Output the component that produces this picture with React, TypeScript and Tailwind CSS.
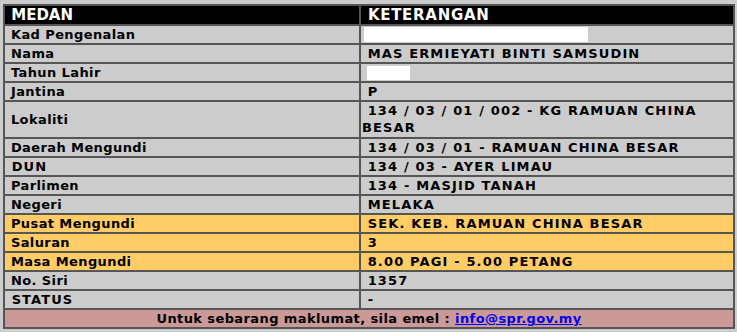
import React from "react";

const font = { fontFamily: '"DejaVu Sans", Verdana, sans-serif' };

type Row = { label: string; value: React.ReactNode; tone?: "gray" | "orange"; tall?: boolean; caps?: boolean };

const rows: Row[] = [
  { label: "Kad Pengenalan", value: <span className="block h-[15px] w-[224px] bg-white mt-[1px] ml-[2px]" /> },
  { label: "Nama", value: "\u00a0MAS ERMIEYATI BINTI SAMSUDIN" },
  { label: "Tahun Lahir", value: <span className="block h-[14px] w-[43px] bg-white mt-[2px] ml-[5px]" /> },
  { label: "Jantina", value: "\u00a0P" },
  { label: "Lokaliti", value: "\u00a0134 / 03 / 01 / 002 - KG RAMUAN CHINA BESAR", tall: true },
  { label: "Daerah Mengundi", value: "\u00a0134 / 03 / 01 - RAMUAN CHINA BESAR" },
  { label: "DUN", value: "\u00a0134 / 03 - AYER LIMAU", caps: true },
  { label: "Parlimen", value: "\u00a0134 - MASJID TANAH" },
  { label: "Negeri", value: "\u00a0MELAKA" },
  { label: "Pusat Mengundi", value: "\u00a0SEK. KEB. RAMUAN CHINA BESAR", tone: "orange" },
  { label: "Saluran", value: "\u00a03", tone: "orange" },
  { label: "Masa Mengundi", value: "\u00a08.00 PAGI - 5.00 PETANG", tone: "orange" },
  { label: "No. Siri", value: "\u00a01357" },
  { label: "STATUS", value: "\u00a0-", caps: true },
];

export default function App() {
  return (
    <div className="min-h-[332px] w-[737px] bg-[#cccccc] pl-[3px] pt-[4px]" style={font}>
      <div className="grid w-[732px] grid-cols-[356px_374px] border border-[#555555] text-[13px] font-bold leading-[17px] text-black">
        <div className="h-[20px] border border-[#555555] bg-black px-[1px] text-[15px] leading-[18px] text-white">
          {"\u00a0MEDAN"}
        </div>
        <div className="h-[20px] border border-[#555555] bg-black px-[1px] text-[15px] leading-[18px] tracking-[0.7px] text-white">
          {"\u00a0KETERANGAN"}
        </div>
        {rows.map((r) => {
          const bg = r.tone === "orange" ? "bg-[#ffcc66]" : "bg-[#cccccc]";
          return (
            <React.Fragment key={r.label}>
              <div
                className={`flex items-center border border-[#555555] px-[1px] ${bg} ${
                  r.caps ? "tracking-[1.1px]" : "tracking-[0.4px]"
                }`}
              >
                {"\u00a0" + r.label}
              </div>
              <div
                className={`border border-[#555555] pl-[1px] pr-0 tracking-[1.15px] ${bg} ${
                  r.tall ? "pb-[1px]" : "h-[19px] whitespace-nowrap overflow-hidden"
                }`}
              >
                {r.value}
              </div>
            </React.Fragment>
          );
        })}
        <div className="col-span-2 h-[19px] border border-[#555555] bg-[#cc9999] text-center tracking-[0.4px]">
          Untuk sebarang maklumat, sila emel :{" "}
          <a href="#" className="text-[#0000ee] underline">
            info@spr.gov.my
          </a>
        </div>
      </div>
    </div>
  );
}
